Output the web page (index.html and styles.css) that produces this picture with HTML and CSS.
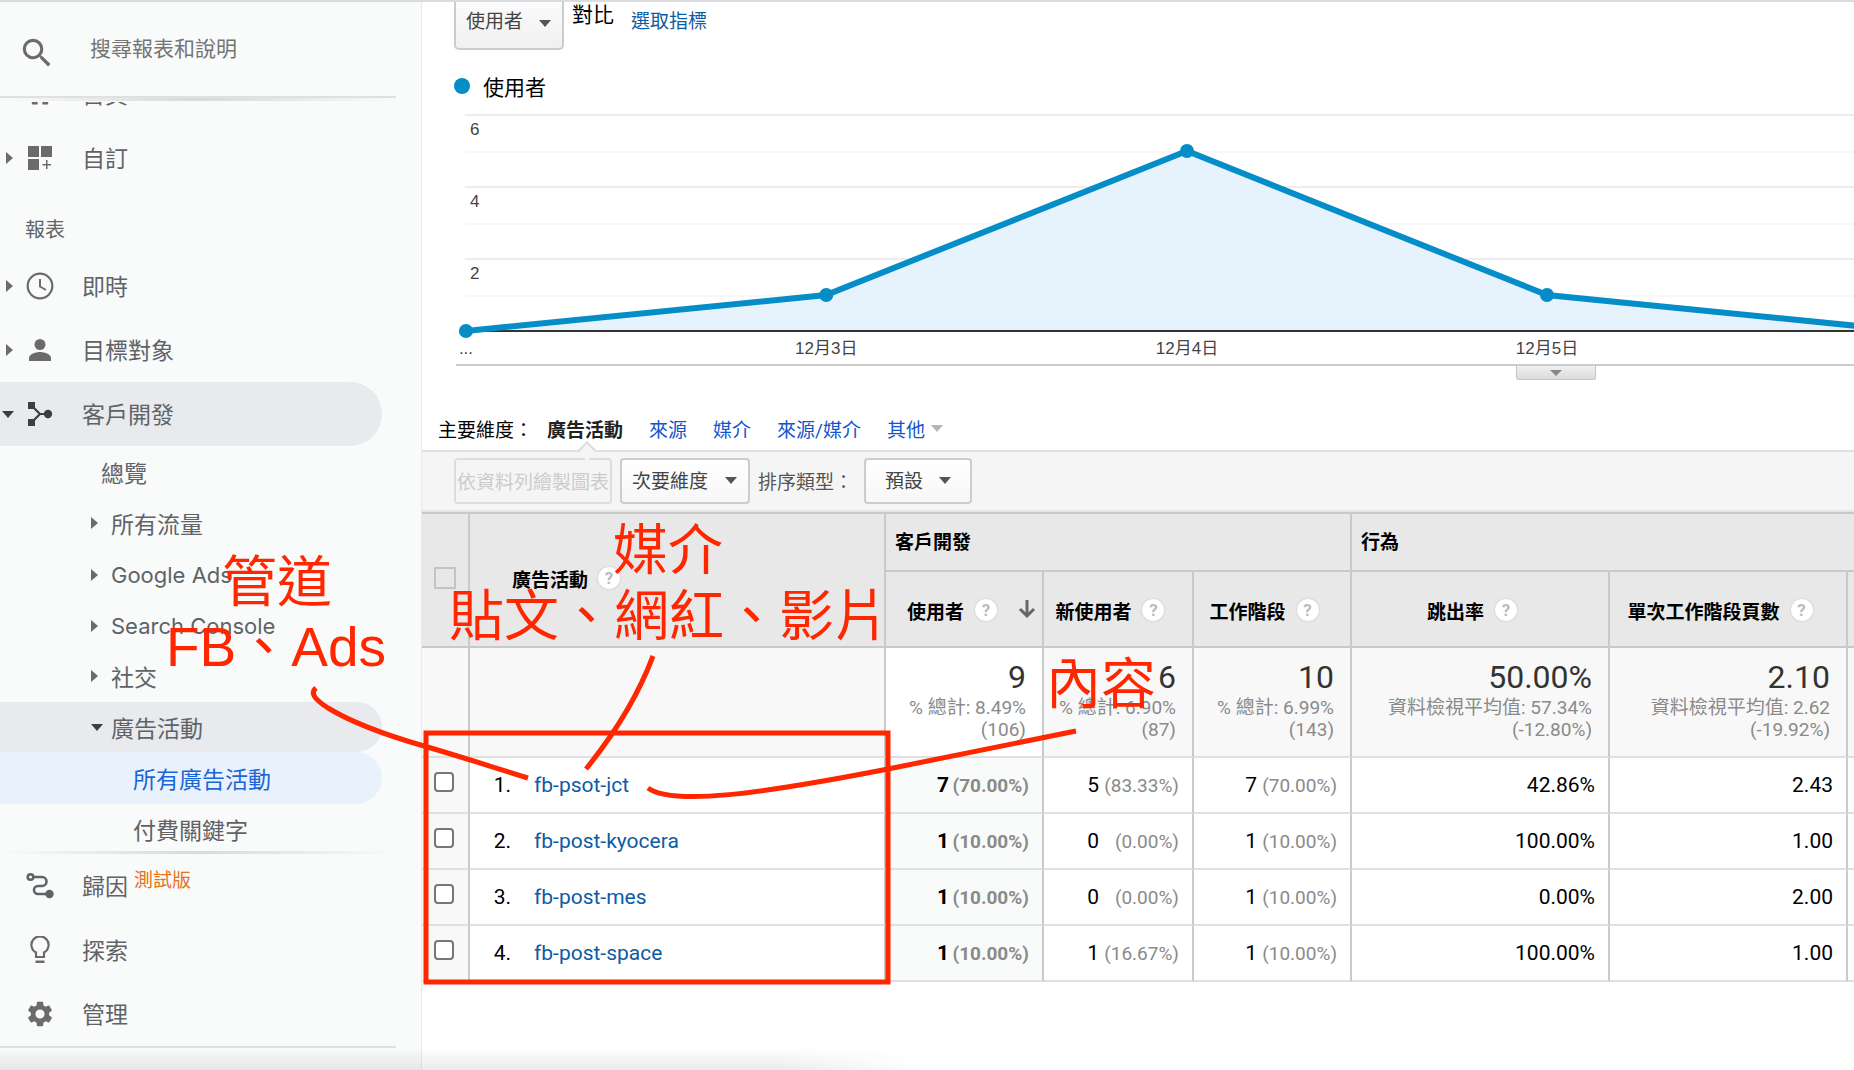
FILE: index.html
```html
<!DOCTYPE html>
<html lang="zh-Hant">
<head>
<meta charset="utf-8">
<title>廣告活動 - Analytics</title>
<link rel="stylesheet" href="styles.css">
</head>
<body>
<div class="app">
  <aside class="sidebar">
    <div class="search">
      <svg class="search-icon" viewBox="0 0 24 24" width="38" height="38" aria-hidden="true"><path fill="#6b6b6b" d="M15.5 14h-.79l-.28-.27A6.47 6.47 0 0 0 16 9.500 6.500 6.500 0 1 0 9.500 16c1.610 0 3.090-.59 4.230-1.570l.27.28v.79l5 4.990L20.490 19l-4.990-5zm-6 0C7.010 14 5 11.990 5 9.500S7.010 5 9.500 5 14 7.010 14 9.500 11.990 14 9.500 14z"/></svg>
      <input type="text" placeholder="搜尋報表和說明" aria-label="搜尋報表和說明">
    </div>
    <nav class="menu">
      <a href="#" class="item">
        <span class="arrow"></span>
        <svg class="icon" viewBox="0 0 24 24" aria-hidden="true"><path fill="#6b6b6b" d="M10 21v-6h4v6h5v-8h3L12 4 2 13h3v8z"/></svg>
        <span>首頁</span>
      </a>
      <a href="#" class="item">
        <span class="arrow arrow-right"></span>
        <svg class="icon" viewBox="0 0 28 28" aria-hidden="true"><path fill="#6b6b6b" d="M2 2h11v11H2zM15 2h11v11H15zM2 15h11v11H2zM20 16h1.500v4H25v1.500h-3.500V25H20v-3.500h-3.500V20H20z"/></svg>
        <span>自訂</span>
      </a>
      <h2 class="group">報表</h2>
      <a href="#" class="item">
        <span class="arrow arrow-right"></span>
        <svg class="icon" viewBox="0 0 28 28" aria-hidden="true"><g fill="none" stroke="#6b6b6b"><circle cx="14" cy="14" r="12.300" stroke-width="2.200"/><path stroke-width="2" d="M14 7v7.500l6 3.500"/></g></svg>
        <span>即時</span>
      </a>
      <a href="#" class="item">
        <span class="arrow arrow-right"></span>
        <svg class="icon" viewBox="0 0 28 28" aria-hidden="true"><circle cx="14" cy="8.500" r="5.500" fill="#6b6b6b"/><path fill="#6b6b6b" d="M3 25v-3c0-4 7-6 11-6s11 2 11 6v3z"/></svg>
        <span>目標對象</span>
      </a>
      <a href="#" class="item open">
        <span class="arrow arrow-down"></span>
        <svg class="icon" viewBox="0 0 28 28" aria-hidden="true"><path fill="#3c4043" d="M2 2h7v7H2zM2 19h7v7H2z"/><circle cx="22" cy="14" r="4.200" fill="#3c4043"/><path fill="none" stroke="#3c4043" stroke-width="2.200" d="M7 7l7 7-7 7M14 14h7"/></svg>
        <span>客戶開發</span>
      </a>
      <div class="submenu">
        <a href="#" class="sub plain">總覽</a>
        <a href="#" class="sub"><span class="arrow arrow-right"></span>所有流量</a>
        <a href="#" class="sub latin"><span class="arrow arrow-right"></span>Google Ads</a>
        <a href="#" class="sub latin"><span class="arrow arrow-right"></span>Search Console</a>
        <a href="#" class="sub"><span class="arrow arrow-right"></span>社交</a>
        <a href="#" class="sub open"><span class="arrow arrow-down"></span>廣告活動</a>
        <a href="#" class="sub leaf current">所有廣告活動</a>
        <a href="#" class="sub leaf">付費關鍵字</a>
      </div>
    </nav>
    <nav class="footer-menu">
      <a href="#" class="item">
        <span class="arrow"></span>
        <svg class="icon" viewBox="0 0 28 28" aria-hidden="true"><g fill="none" stroke="#5f6368" stroke-width="2.600"><circle cx="4.500" cy="5" r="2.800"/><path d="M7.500 5H16a4.500 4.500 0 0 1 0 9h-4a4 4 0 0 0 0 8h10"/></g><circle cx="23.500" cy="22" r="4.200" fill="#5f6368"/></svg>
        <span>歸因</span>
        <span class="beta">測試版</span>
      </a>
      <a href="#" class="item">
        <span class="arrow"></span>
        <svg class="icon" viewBox="0 0 28 28" aria-hidden="true"><path fill="none" stroke="#6b6b6b" stroke-width="2.200" d="M10 21v-4.500A8.600 8.600 0 1 1 18 16.500V21z"/><path fill="#6b6b6b" d="M9.500 24.500h9V27h-9z"/></svg>
        <span>探索</span>
      </a>
      <a href="#" class="item">
        <span class="arrow"></span>
        <svg class="icon" viewBox="1 1 22 22" aria-hidden="true"><path fill="#6b6b6b" d="M19.140 12.940c.04-.3.060-.61.060-.94 0-.32-.02-.64-.07-.94l2.030-1.580a.49.49 0 0 0 .12-.61l-1.920-3.320a.49.49 0 0 0-.59-.22l-2.390.96c-.5-.38-1.030-.7-1.620-.94l-.36-2.540a.48.48 0 0 0-.48-.41h-3.840a.48.48 0 0 0-.47.41l-.36 2.540c-.59.24-1.130.57-1.620.94l-2.390-.96a.49.49 0 0 0-.59.22L2.740 8.870c-.12.21-.08.47.12.61l2.030 1.580c-.05.3-.09.63-.09.94s.02.64.07.94l-2.030 1.580a.49.49 0 0 0-.12.61l1.920 3.320c.12.22.37.29.59.22l2.390-.96c.5.38 1.030.7 1.620.94l.36 2.540c.05.24.24.41.48.41h3.840c.24 0 .44-.17.47-.41l.36-2.540c.59-.24 1.130-.56 1.620-.94l2.390.96c.22.08.47 0 .59-.22l1.920-3.320a.49.49 0 0 0-.12-.61zM12 15.600A3.600 3.600 0 1 1 12 8.400a3.600 3.600 0 0 1 0 7.200z"/></svg>
        <span>管理</span>
      </a>
    </nav>
  </aside>

  <main class="report">
    <div class="metrics">
      <span class="select metric-select">
        <select aria-label="指標"><option>使用者</option></select>
      </span>
      <span class="versus">對比</span>
      <a href="#" class="pick">選取指標</a>
    </div>
    <div class="legend"><i class="dot"></i>使用者</div>

    <div class="chart">
      <svg width="100%" height="254" role="img" aria-label="使用者折線圖">
        <svg width="100%" height="254" viewBox="0 0 1432 254" preserveAspectRatio="none">
          <path d="M43 42H1432M43 114H1432M43 186H1432" stroke="#f8f8f8" stroke-width="2"/>
          <path d="M43 5H1432M43 77H1432M43 149H1432" stroke="#ededed" stroke-width="2"/>
          <path d="M44 221L404 185L765 41L1125 185L1486 221z" fill="#e6f2fc" fill-opacity=".94"/>
          <path d="M44 221H1432" stroke="#333" stroke-width="2"/>
          <path d="M44 221L404 185L765 41L1125 185L1486 221" fill="none" stroke="#058dc7" stroke-width="6"/>
        </svg>
        <g fill="#058dc7">
          <circle cx="3.070%" cy="221" r="7"/><circle cx="28.230%" cy="185" r="7"/><circle cx="53.420%" cy="41" r="7"/><circle cx="78.560%" cy="185" r="7"/>
        </g>
        <g class="axis">
          <text x="48" y="25">6</text><text x="48" y="97">4</text><text x="48" y="169">2</text>
          <g text-anchor="middle">
            <text x="3.070%" y="244">...</text><text x="28.230%" y="244">12月3日</text><text x="53.420%" y="244">12月4日</text><text x="78.560%" y="244">12月5日</text>
          </g>
        </g>
      </svg>
      <div class="chart-foot"><button type="button" class="expander" aria-label="展開註解"></button></div>
    </div>

    <div class="dimensions">
      <span class="dim-label">主要維度：</span>
      <a href="#" class="dim active">廣告活動</a>
      <a href="#" class="dim">來源</a>
      <a href="#" class="dim">媒介</a>
      <a href="#" class="dim">來源/媒介</a>
      <a href="#" class="dim more">其他</a>
    </div>

    <div class="toolbar">
      <button type="button" class="plot" disabled>依資料列繪製圖表</button>
      <span class="select"><select aria-label="次要維度"><option>次要維度</option></select></span>
      <label class="sort-label" for="sort">排序類型：</label>
      <span class="select sort-select"><select id="sort"><option>預設</option></select></span>
    </div>

    <table class="data">
      <colgroup><col class="c-check"><col><col class="c-users"><col class="c-new"><col class="c-sessions"><col class="c-bounce"><col class="c-pages"><col class="c-rest"></colgroup>
      <thead>
        <tr class="head-groups">
          <th rowspan="2" class="check-head"><input type="checkbox" class="check check-all" aria-label="全選" disabled></th>
          <th rowspan="2" class="campaign-head"><span class="th">廣告活動<i class="help">?</i></span></th>
          <th colspan="3" class="group-head">客戶開發</th>
          <th colspan="3" class="group-head">行為</th>
        </tr>
        <tr class="head-metrics">
          <th><span class="th sorted">使用者<i class="help">?</i><svg class="sort-arrow" width="18" height="20" viewBox="0 0 18 20" aria-hidden="true"><path fill="none" stroke="#666" stroke-width="3" d="M9 0v16M2 9l7 7 7-7"/></svg></span></th>
          <th><span class="th">新使用者<i class="help">?</i></span></th>
          <th><span class="th">工作階段<i class="help">?</i></span></th>
          <th><span class="th">跳出率<i class="help">?</i></span></th>
          <th><span class="th">單次工作階段頁數<i class="help">?</i></span></th>
          <th></th>
        </tr>
      </thead>
      <tbody>
        <tr class="summary">
          <td></td><td></td>
          <td class="main-metric"><b>9</b>% 總計: 8.49%<br>(106)</td>
          <td><b>6</b>% 總計: 6.90%<br>(87)</td>
          <td><b>10</b>% 總計: 6.99%<br>(143)</td>
          <td><b>50.00%</b>資料檢視平均值: 57.34%<br>(-12.80%)</td>
          <td><b>2.10</b>資料檢視平均值: 2.62<br>(-19.92%)</td>
          <td></td>
        </tr>
        <tr class="row">
          <td class="pick-cell"><input type="checkbox" class="check" aria-label="fb-psot-jct"></td>
          <td class="name"><span class="index">1.</span><a href="#">fb-psot-jct</a></td>
          <td class="users">7<span class="pct">(70.00%)</span></td>
          <td>5<span class="pct">(83.33%)</span></td>
          <td>7<span class="pct">(70.00%)</span></td>
          <td>42.86%</td><td>2.43</td><td></td>
        </tr>
        <tr class="row">
          <td class="pick-cell"><input type="checkbox" class="check" aria-label="fb-post-kyocera"></td>
          <td class="name"><span class="index">2.</span><a href="#">fb-post-kyocera</a></td>
          <td class="users">1<span class="pct">(10.00%)</span></td>
          <td>0<span class="pct">(0.00%)</span></td>
          <td>1<span class="pct">(10.00%)</span></td>
          <td>100.00%</td><td>1.00</td><td></td>
        </tr>
        <tr class="row">
          <td class="pick-cell"><input type="checkbox" class="check" aria-label="fb-post-mes"></td>
          <td class="name"><span class="index">3.</span><a href="#">fb-post-mes</a></td>
          <td class="users">1<span class="pct">(10.00%)</span></td>
          <td>0<span class="pct">(0.00%)</span></td>
          <td>1<span class="pct">(10.00%)</span></td>
          <td>0.00%</td><td>2.00</td><td></td>
        </tr>
        <tr class="row">
          <td class="pick-cell"><input type="checkbox" class="check" aria-label="fb-post-space"></td>
          <td class="name"><span class="index">4.</span><a href="#">fb-post-space</a></td>
          <td class="users">1<span class="pct">(10.00%)</span></td>
          <td>1<span class="pct">(16.67%)</span></td>
          <td>1<span class="pct">(10.00%)</span></td>
          <td>100.00%</td><td>1.00</td><td></td>
        </tr>
      </tbody>
    </table>
  </main>

  <div class="page-shadow"></div>

  <!-- Hand-drawn notes over the report -->
  <div class="notes">
    <svg width="1160" height="1000" aria-hidden="true">
      <g fill="none" stroke="#ff2600" stroke-width="5">
        <rect x="426" y="733" width="462" height="249"/>
        <path d="M316 688C310 693 314 699 328 708C356 725 396 738 424 746C462 757 492 767 528 778"/>
        <path d="M653 656Q632 712 586 769"/>
        <path d="M648 788C672 806 760 794 888 769L1076 731"/>
      </g>
    </svg>
    <p class="note note-channel">管道</p>
    <p class="note note-sources">FB、Ads</p>
    <p class="note note-medium">媒介</p>
    <p class="note note-kinds">貼文、網紅、影片</p>
    <p class="note note-content">內容</p>
  </div>
</div>
</body>
</html>
```
FILE: styles.css
```css
* { box-sizing: border-box; }

body {
  margin: 0;
  font-family: Roboto, "Noto Sans CJK TC", sans-serif;
  font-size: 19px;
  color: #000;
  background: #fff;
}

a { text-decoration: none; color: #0d5ba2; }
button, select, input { font: inherit; }

.app {
  position: relative;
  display: flex;
  height: 100vh;
  overflow: hidden;
  border-top: 2px solid #dadce0;
}

/* Sidebar */
.sidebar {
  flex: none;
  display: flex;
  flex-direction: column;
  width: 422px;
  background: #f9fbfa;
  border-right: 1px solid #e8eaed;
  font-family: Inter, "Noto Sans CJK TC", sans-serif;
}

.search {
  flex: none;
  display: flex;
  align-items: center;
  gap: 34px;
  width: 396px;
  height: 96px;
  padding: 8px 0 0 18px;
  border-bottom: 2px solid #e0e0e0;
}

.search input {
  flex: 1;
  min-width: 0;
  padding: 0 0 10px;
  border: 0;
  outline: 0;
  background: none;
  font-size: 21px;
}

.search input::placeholder { color: #757575; opacity: 1; }

/* The list is scrolled down, so its last entries sit against the footer */
.menu {
  flex: 1;
  display: flex;
  flex-direction: column;
  justify-content: flex-end;
  min-height: 0;
  margin-top: 4px;
  overflow: hidden;
}

.menu::before, .footer-menu::before {
  content: "";
  position: absolute;
  width: 396px;
  height: 3px;
  background: linear-gradient(90deg, #f9fbfa, #d8dad9 50%, #f9fbfa);
}

.menu::before { top: 96px; }
.footer-menu::before { margin-top: -3px; }

.item {
  flex: none;
  display: flex;
  align-items: center;
  width: 382px;
  height: 64px;
  color: #5f6368;
  font-size: 23px;
}

.item > span:not(.arrow) { padding-bottom: 2px; }
.item .arrow { margin: 0 0 0 6px; }
.item .icon { width: 28px; height: 28px; margin: 0 28px 0 8px; }

.open { background: #e8eaed; border-radius: 0 32px 32px 0; }

.item.open .arrow { margin-left: 2px; }
.item.open .icon { margin-left: 12px; }

.arrow { flex: none; width: 12px; }
.arrow::before { content: ""; display: block; width: 0; }

.arrow-right::before {
  border: 6px solid transparent;
  border-left: 7px solid #6b6b6b;
  border-right: 0;
}

.arrow-down::before {
  border: 6px solid transparent;
  border-top: 7px solid #3c4043;
  border-bottom: 0;
}

.group {
  flex: none;
  height: 64px;
  margin: 0;
  padding: 25px 0 0 25px;
  color: #5f6368;
  font-size: 20px;
  font-weight: 400;
  line-height: 30px;
}

.submenu { flex: none; }

.sub {
  display: flex;
  align-items: center;
  width: 382px;
  height: 50px;
  padding-left: 91px;
  gap: 8px;
  color: #5f6368;
  font-size: 23px;
}

.sub:nth-child(odd) { height: 52px; }
.sub.plain { padding-left: 101px; }
.sub.leaf { padding-left: 133px; }
.sub.latin { padding-top: 2px; font-size: 22px; }

.current {
  background: #e8f1fc;
  border-radius: 0 26px 26px 0;
  color: #1a66d6;
}

.footer-menu { flex: none; padding-bottom: 22px; }

.footer-menu::after {
  content: "";
  display: block;
  width: 396px;
  height: 2px;
  background: #e0e0e0;
}

.item .beta { margin: 0 0 14px 6px; color: #e8711a; font-size: 19px; }

/* Report */
.report { flex: 1; min-width: 0; }

.metrics { display: flex; align-items: flex-start; padding-left: 32px; }

.select { position: relative; display: inline-flex; }

.select::after {
  content: "";
  position: absolute;
  right: 13px;
  top: 19px;
  border: 6px solid transparent;
  border-top: 7px solid #555;
  border-bottom: 0;
  pointer-events: none;
}

.select select {
  appearance: none;
  width: 130px;
  height: 46px;
  padding: 0 0 0 10px;
  border: 2px solid #ccc;
  border-radius: 4px;
  background: linear-gradient(#fff, #f7f7f7);
  color: #444;
}

.metric-select select {
  width: 110px;
  height: 48px;
  padding-bottom: 8px;
  border-top: 0;
  border-radius: 0 0 5px 5px;
  background: linear-gradient(#fbfbfb, #f0f0f0);
}

.metric-select::after { top: 18px; }

.versus { margin-left: 8px; font-size: 21px; line-height: 26px; }
.pick { margin: 5px 0 0 17px; line-height: 30px; }

.legend {
  display: flex;
  align-items: center;
  gap: 13px;
  height: 60px;
  padding: 12px 0 0 32px;
  font-size: 21px;
}

.dot { width: 16px; height: 16px; border-radius: 50%; background: #058dc7; }

.chart svg { display: block; }

.axis {
  fill: #444;
  font-family: "Liberation Sans", "Noto Sans CJK TC", sans-serif;
  font-size: 17px;
}

.chart-foot {
  height: 16px;
  margin-left: 34px;
  padding-left: 74%;
  border-top: 2px solid #ccc;
}

.expander {
  display: flex;
  justify-content: center;
  align-items: center;
  width: 80px;
  height: 14px;
  border: 1px solid #c4c4c4;
  border-top: 0;
  border-radius: 0 0 3px 3px;
  background: linear-gradient(#f0f0f0, #dcdcdc);
}

.expander::before {
  content: "";
  border: 6px solid transparent;
  border-top-color: #888;
  border-bottom: 0;
}

.dimensions {
  display: flex;
  align-items: center;
  gap: 26px;
  height: 72px;
  padding: 26px 0 0 16px;
  border-bottom: 2px solid #e0e0e0;
}

.dim-label { margin-right: -12px; }
.dim { color: #1155cc; }
.dim.active { position: relative; color: #222; font-weight: 700; }

.dim.active::after {
  content: "";
  position: absolute;
  left: 50%;
  bottom: -16px;
  width: 12px;
  height: 12px;
  margin-left: -5px;
  border: 2px solid #ddd;
  border-width: 2px 0 0 2px;
  background: #f5f5f5;
  transform: rotate(45deg);
}

.dim.more { display: flex; align-items: center; gap: 6px; }

.dim.more::after {
  content: "";
  border: 6px solid transparent;
  border-top: 7px solid #b5b5b5;
  border-bottom: 0;
}

.toolbar {
  display: flex;
  align-items: center;
  gap: 8px;
  height: 60px;
  padding-left: 32px;
  border-bottom: 2px solid #e6e6e6;
  background: #f5f5f5;
}

.plot {
  width: 158px;
  height: 46px;
  padding: 0 0 2px;
  border: 2px solid #ddd;
  border-radius: 4px;
  background: none;
  color: #ccc;
  white-space: nowrap;
}

.sort-label { width: 98px; padding-bottom: 2px; color: #555; white-space: nowrap; }
.sort-select select { width: 108px; padding-left: 19px; }
.sort-select::after { right: 21px; }

/* Data table */
.data {
  width: 100%;
  table-layout: fixed;
  border-collapse: separate;
  border-spacing: 0;
  border-top: 2px solid #c9c9c9;
}

.c-check { width: 48px; }
.c-users, .c-sessions { width: 158px; }
.c-new { width: 150px; }
.c-bounce { width: 258px; }
.c-pages { width: 238px; }
.c-rest { width: 6px; }

.data th, .data td {
  padding: 0;
  border-right: 2px solid #c9c9c9;
  white-space: nowrap;
}

.data tr > :last-child { border-right: 0; }

.data th {
  border-bottom: 2px solid #c9c9c9;
  background: #e8e8e8;
  font-weight: 700;
}

.head-groups { height: 58px; }
.head-metrics { height: 76px; }
.head-metrics th { padding-top: 2px; }
.data .group-head { padding: 0 0 4px 9px; text-align: left; }
.data .check-head { padding-bottom: 4px; }
.data .campaign-head { padding: 0 0 4px 42px; text-align: left; }

.th {
  display: flex;
  align-items: center;
  justify-content: center;
  gap: 11px;
  padding-right: 16px;
}

.campaign-head .th { justify-content: flex-start; gap: 10px; }
.sorted { justify-content: flex-end; padding-right: 6px; }
.sort-arrow { margin-left: 10px; }

.help {
  width: 22px;
  height: 22px;
  border-radius: 50%;
  background: #fff;
  box-shadow: 0 0 2px #bbb;
  color: #bbb;
  font-size: 17px;
  font-style: normal;
  line-height: 22px;
  text-align: center;
}

.check {
  appearance: none;
  display: block;
  width: 20px;
  height: 20px;
  margin: 0 0 6px 12px;
  border: 2px solid #767676;
  border-radius: 4px;
  background: #fff;
}

.check-all {
  width: 22px;
  height: 22px;
  margin-bottom: 0;
  border-color: #c4c4c4;
  border-radius: 0;
  background: none;
}

.summary td {
  height: 110px;
  padding: 10px 16px 0 0;
  border-bottom: 2px solid #e0e0e0;
  background: #f8f8f8;
  color: #8a8a8a;
  line-height: 22px;
  text-align: right;
  vertical-align: top;
}

.summary .main-metric { background: #fff; }

.summary b {
  display: block;
  margin-bottom: 1px;
  color: #333;
  font-size: 32px;
  font-weight: 400;
  line-height: 38px;
}

.row td {
  height: 56px;
  padding-right: 13px;
  border-bottom: 2px solid #e0e0e0;
  font-size: 21px;
  line-height: 30px;
  text-align: right;
}

.row .pick-cell { background: #f8f8f8; }
.row .name { text-align: left; }
.row .users { background: #f9fbfa; font-weight: 700; }

.index { display: inline-block; width: 41px; margin-right: 23px; text-align: right; }

.pct {
  display: inline-block;
  min-width: 80px;
  color: #8a8a8a;
  font-size: 19px;
}

/* Shade along the bottom edge of the window */
.page-shadow {
  position: absolute;
  left: 0;
  bottom: 0;
  width: 920px;
  height: 22px;
  background: linear-gradient(rgba(0, 0, 0, 0), rgba(0, 0, 0, .08));
  -webkit-mask-image: linear-gradient(90deg, #000 85%, transparent);
  mask-image: linear-gradient(90deg, #000 85%, transparent);
}

/* Annotations */
.notes { position: absolute; left: 0; top: -2px; pointer-events: none; }
.notes svg { display: block; }

.note {
  position: absolute;
  margin: 0;
  color: #ff2600;
  font-family: "Liberation Sans", "Noto Sans CJK TC", sans-serif;
  font-size: 55px;
  line-height: 66px;
  white-space: nowrap;
}

.note-channel { left: 222px; top: 549px; }
.note-sources { left: 166px; top: 614px; }
.note-medium { left: 613px; top: 517px; }
.note-kinds { left: 449px; top: 583px; }
.note-content { left: 1046px; top: 651px; }
```
